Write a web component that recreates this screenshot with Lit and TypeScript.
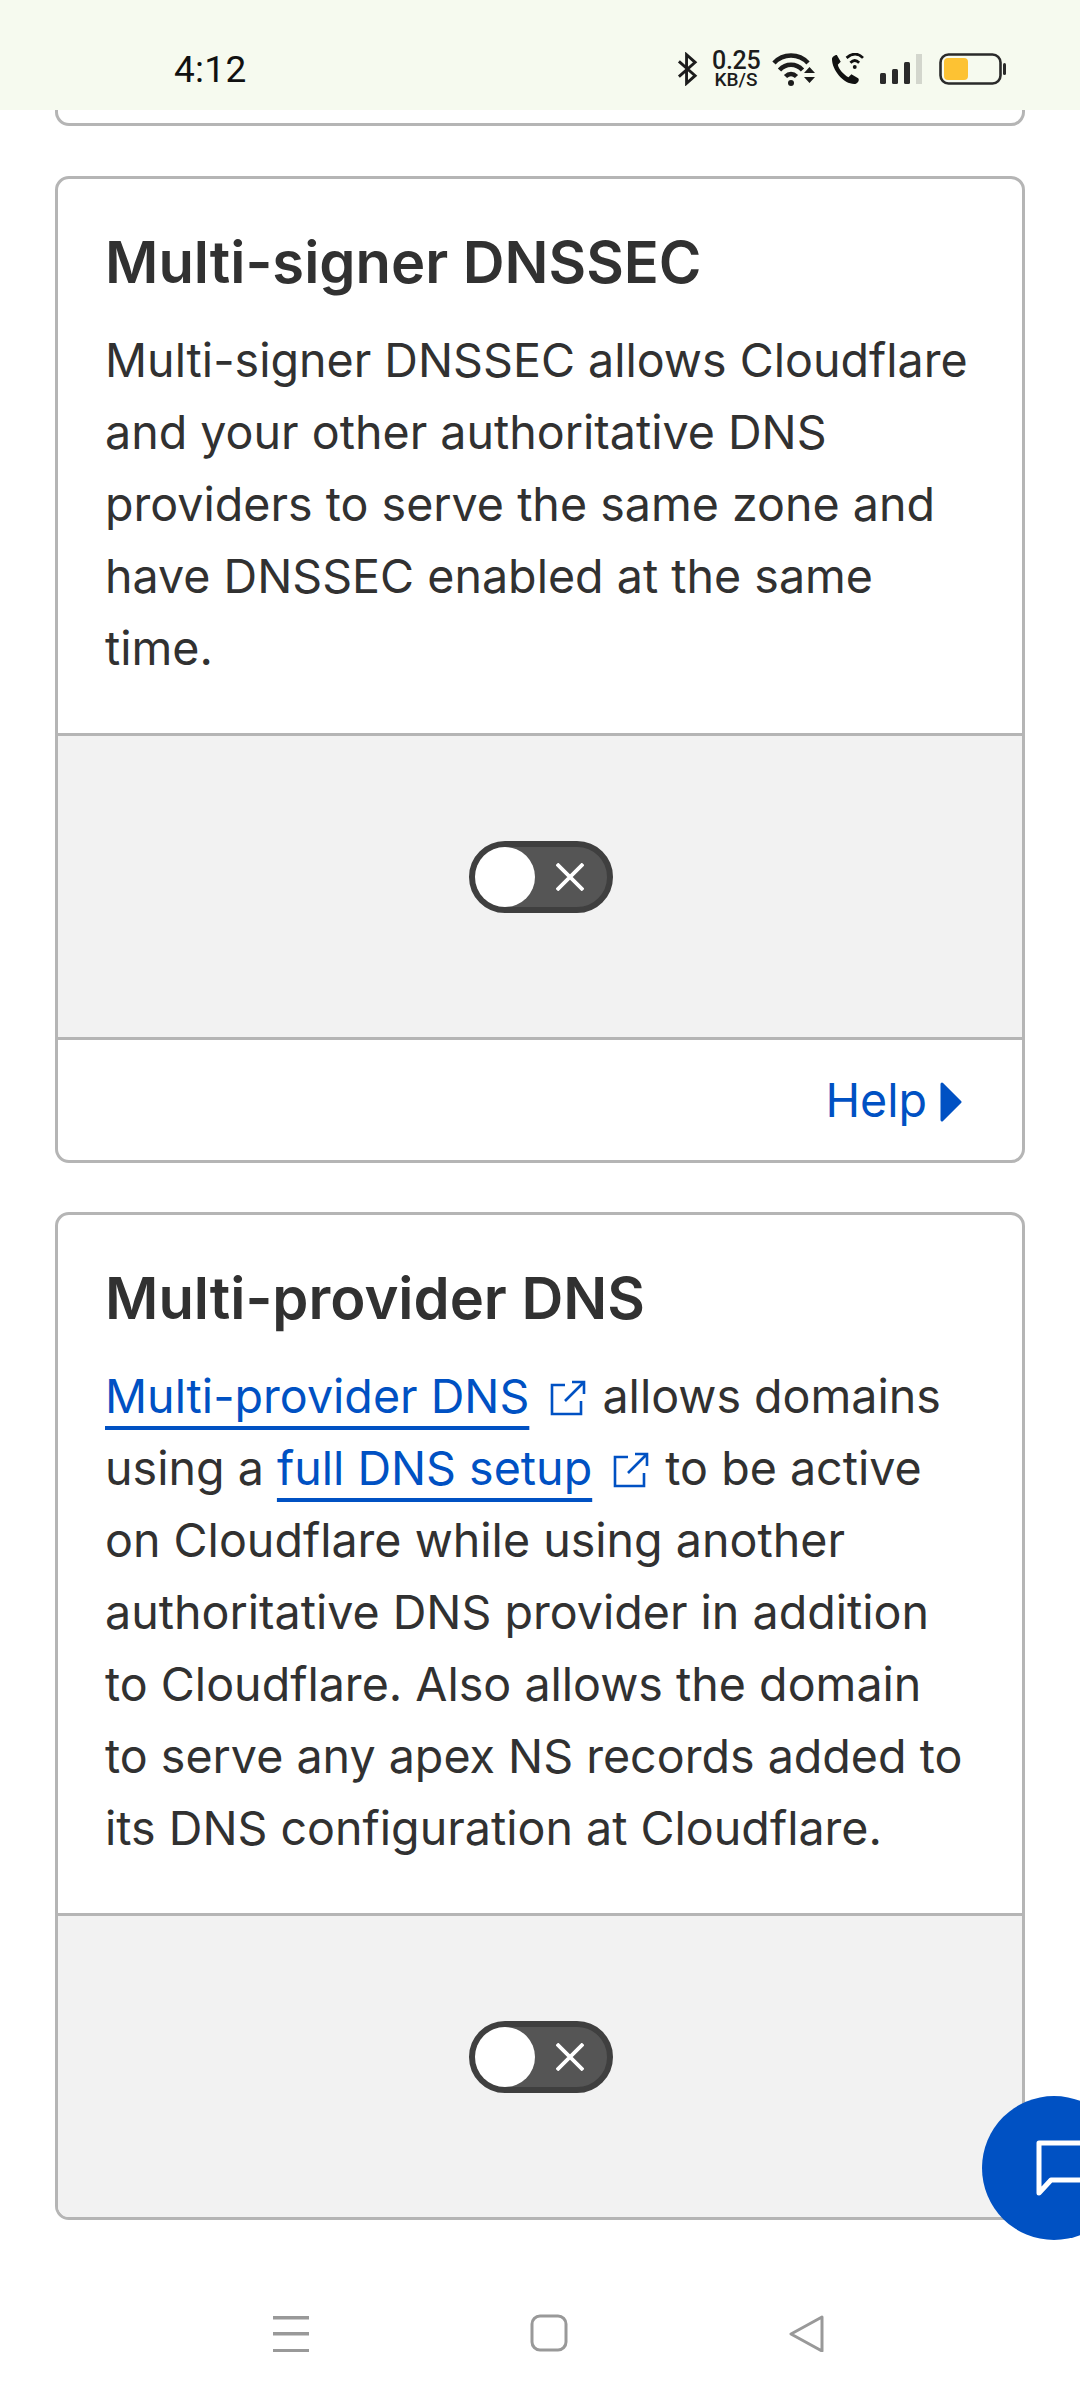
import { LitElement, html, css } from "lit";
import { customElement } from "lit/decorators.js";

const ext = html`<svg class="ext" viewBox="0 0 36 36" fill="none" stroke="#0051c3" stroke-width="2.600"><path d="M15 5H2v29h29V21"/><path d="M15 21 34 2M22 2h12v12"/></svg>`;

const toggle = html`<div class="toggle"><span class="knob"></span><svg class="x" viewBox="0 0 30 30" stroke="#fff" stroke-width="4" fill="none"><path d="M1 1 29 29M29 1 1 29"/></svg></div>`;

@customElement("app-root")
export class AppRoot extends LitElement {
  static styles = css`
    :host { display: block; width: 1080px; height: 2400px; position: relative; overflow: hidden; background: #fff; font-family: Inter, "Liberation Sans", sans-serif; color: #313131; }
    .status { height: 110px; background: #f6faef; box-sizing: border-box; padding: 48px 0 0 174px; display: flex; align-items: flex-start; position: relative; z-index: 2; }
    .time { font: 400 37px/44px Roboto, sans-serif; color: #111; width: 503px; letter-spacing: .3px; }
    .icons { display: flex; align-items: center; height: 44px; margin-top: -1px; }
    .icons svg { display: block; flex: none; }
    .speed { font-family: Roboto, sans-serif; color: #1c1c1c; text-align: center; width: 48px; margin: 0 12px 0 14px; padding-top: 2px; font-weight: 500; white-space: nowrap; }
    .speed b { display: block; font-weight: 500; font-size: 25px; line-height: 20px; letter-spacing: -.3px; }
    .speed i { display: block; font-style: normal; font-size: 19px; line-height: 18px; }
    .phone, .signal, .battery { margin-left: 16px; }
    main { padding: 0 55px; display: flex; flex-direction: column; gap: 49px; }
    .card { border: 3px solid #b5b5b5; border-radius: 14px; background: #fff; overflow: hidden; }
    .stub { border-top: 0; border-radius: 0 0 14px 14px; box-sizing: border-box; height: 16px; margin-bottom: 1px; }
    .body { padding: 45px 47px 49px; }
    h2 { margin: 0; font-size: 57.900px; line-height: 76px; font-weight: 600; color: #313131; }
    p { margin: 24px 0 0; font-size: 46.600px; line-height: 72px; font-weight: 400; color: #313131; }
    a { color: #0051c3; text-decoration: underline; text-decoration-thickness: 4px; text-underline-offset: 13px; text-decoration-skip-ink: none; }
    .ext { width: 36px; height: 36px; margin: 0 3px 0 21px; vertical-align: -3px; }
    .grey { height: 301px; background: #f2f2f2; border-top: 3px solid #b5b5b5; display: flex; justify-content: center; }
    .toggle { margin: 105px 0 0 2px; width: 144px; height: 72px; border: 6px solid #3f3f3f; border-radius: 36px; box-sizing: border-box; background: #555; display: flex; align-items: center; justify-content: space-between; }
    .knob { width: 60px; height: 60px; border-radius: 50%; background: #fff; display: block; }
    .x { width: 28px; height: 28px; margin-right: 23px; display: block; }
    .foot { height: 120px; border-top: 3px solid #b5b5b5; display: flex; justify-content: flex-end; align-items: center; padding-right: 60px; gap: 13px; color: #0051c3; font-size: 46.600px; }
    .foot svg { width: 22px; height: 40px; display: block; margin-top: 4px; }
    .chat { position: absolute; left: 982px; top: 2096px; width: 144px; height: 144px; border-radius: 50%; background: #0051c3; z-index: 3; }
    .chat svg { position: absolute; left: 54px; top: 44px; width: 90px; height: 64px; }
    .nav { position: absolute; left: 0; right: 0; top: 2240px; height: 160px; background: #fff; z-index: 2; display: flex; align-items: flex-start; padding: 74px 0 0 272px; box-sizing: border-box; }
    .nav svg { display: block; flex: none; }
    .sq, .tri { margin-left: 220px; }
  `;

  render() {
    return html`
      <div class="status">
        <div class="time">4:12</div>
        <div class="icons">
          <svg width="21" height="34" viewBox="0 0 22 34" fill="none" stroke="#1c1c1c" stroke-width="3"><path d="M2 9 19 24 10 32V2l9 8L2 25"/></svg>
          <div class="speed"><b>0.25</b><i>KB/S</i></div>
          <svg width="43" height="34" viewBox="0 0 43 34" fill="none" stroke="#1c1c1c" stroke-width="4.500"><path d="M2 11C11 1 27 1 36 11"/><path d="M7.500 18C14 11 24 11 30.500 18"/><path d="M13.500 24.500C17 21 21 21 24.500 24.500"/><circle cx="19" cy="31" r="3" fill="#1c1c1c" stroke="none"/><path d="M32 21h11l-5.500-6zM32 25h11l-5.500 6z" fill="#1c1c1c" stroke="none"/></svg>
          <svg class="phone" width="33" height="32" viewBox="0 0 34 33"><path d="M1 6c0-2 3-4 5-4l4 7-3 3c1 5 6 10 11 13l3-3 7 4c2 2-1 6-4 6C13 32 1 18 1 6z" fill="#111"/><path d="M16 5c6-5 12-5 17 0M20 10c3-3 6-3 9 0" fill="none" stroke="#111" stroke-width="2.800"/><circle cx="24.500" cy="14.500" r="2" fill="#111"/></svg>
          <svg class="signal" width="43" height="30" viewBox="0 0 43 30"><rect x="0" y="19" width="6" height="11" rx="1.500" fill="#2a2a2a"/><rect x="12" y="15" width="6" height="15" rx="1.500" fill="#2a2a2a"/><rect x="24" y="8" width="6" height="22" rx="1.500" fill="#2a2a2a"/><rect x="36" y="0" width="6" height="30" fill="#d3d6cd"/></svg>
          <svg class="battery" width="67" height="32" viewBox="0 0 67 32"><rect x="1.500" y="1.500" width="60" height="29" rx="8" fill="none" stroke="#2a2a2a" stroke-width="2.600"/><rect x="5" y="5" width="24" height="22" rx="4" fill="#fdc233"/><rect x="64" y="10" width="3" height="12" rx="1.500" fill="#2a2a2a"/></svg>
        </div>
      </div>
      <main>
        <div class="card stub"></div>
        <section class="card">
          <div class="body">
            <h2>Multi-signer DNSSEC</h2>
            <p>Multi-signer DNSSEC allows Cloudflare and your other authoritative DNS providers to serve the same zone and have DNSSEC enabled at the same time.</p>
          </div>
          <div class="grey">${toggle}</div>
          <div class="foot">Help <svg viewBox="0 0 22 40"><path d="M2 2 20 20 2 38z" fill="#0051c3" stroke="#0051c3" stroke-width="3" stroke-linejoin="round"/></svg></div>
        </section>
        <section class="card">
          <div class="body">
            <h2>Multi-provider DNS</h2>
            <p><a>Multi-provider DNS</a>${ext} allows domains using a <a>full DNS setup</a>${ext} to be active on Cloudflare while using another authoritative DNS provider in addition to Cloudflare. Also allows the domain to serve any apex NS records added to its DNS configuration at Cloudflare.</p>
          </div>
          <div class="grey">${toggle}</div>
        </section>
      </main>
      <div class="chat"><svg viewBox="0 0 90 64" fill="none" stroke="#fff" stroke-width="5" stroke-linejoin="round"><path d="M92 3H3v50l12-13h80"/></svg></div>
      <div class="nav">
        <svg width="38" height="38" viewBox="0 0 38 38" fill="#999"><rect x="1" y="2" width="36" height="3.500"/><rect x="1" y="18" width="36" height="3.500"/><rect x="1" y="35" width="36" height="3"/></svg>
        <svg class="sq" width="38" height="38" viewBox="0 0 38 38" fill="none" stroke="#999" stroke-width="3"><rect x="2" y="2" width="34" height="34" rx="8"/></svg>
        <svg class="tri" width="38" height="38" viewBox="0 0 38 38" fill="none" stroke="#999" stroke-width="3" stroke-linejoin="round"><path d="M34 3 3 20 34 37z"/></svg>
      </div>
    `;
  }
}
